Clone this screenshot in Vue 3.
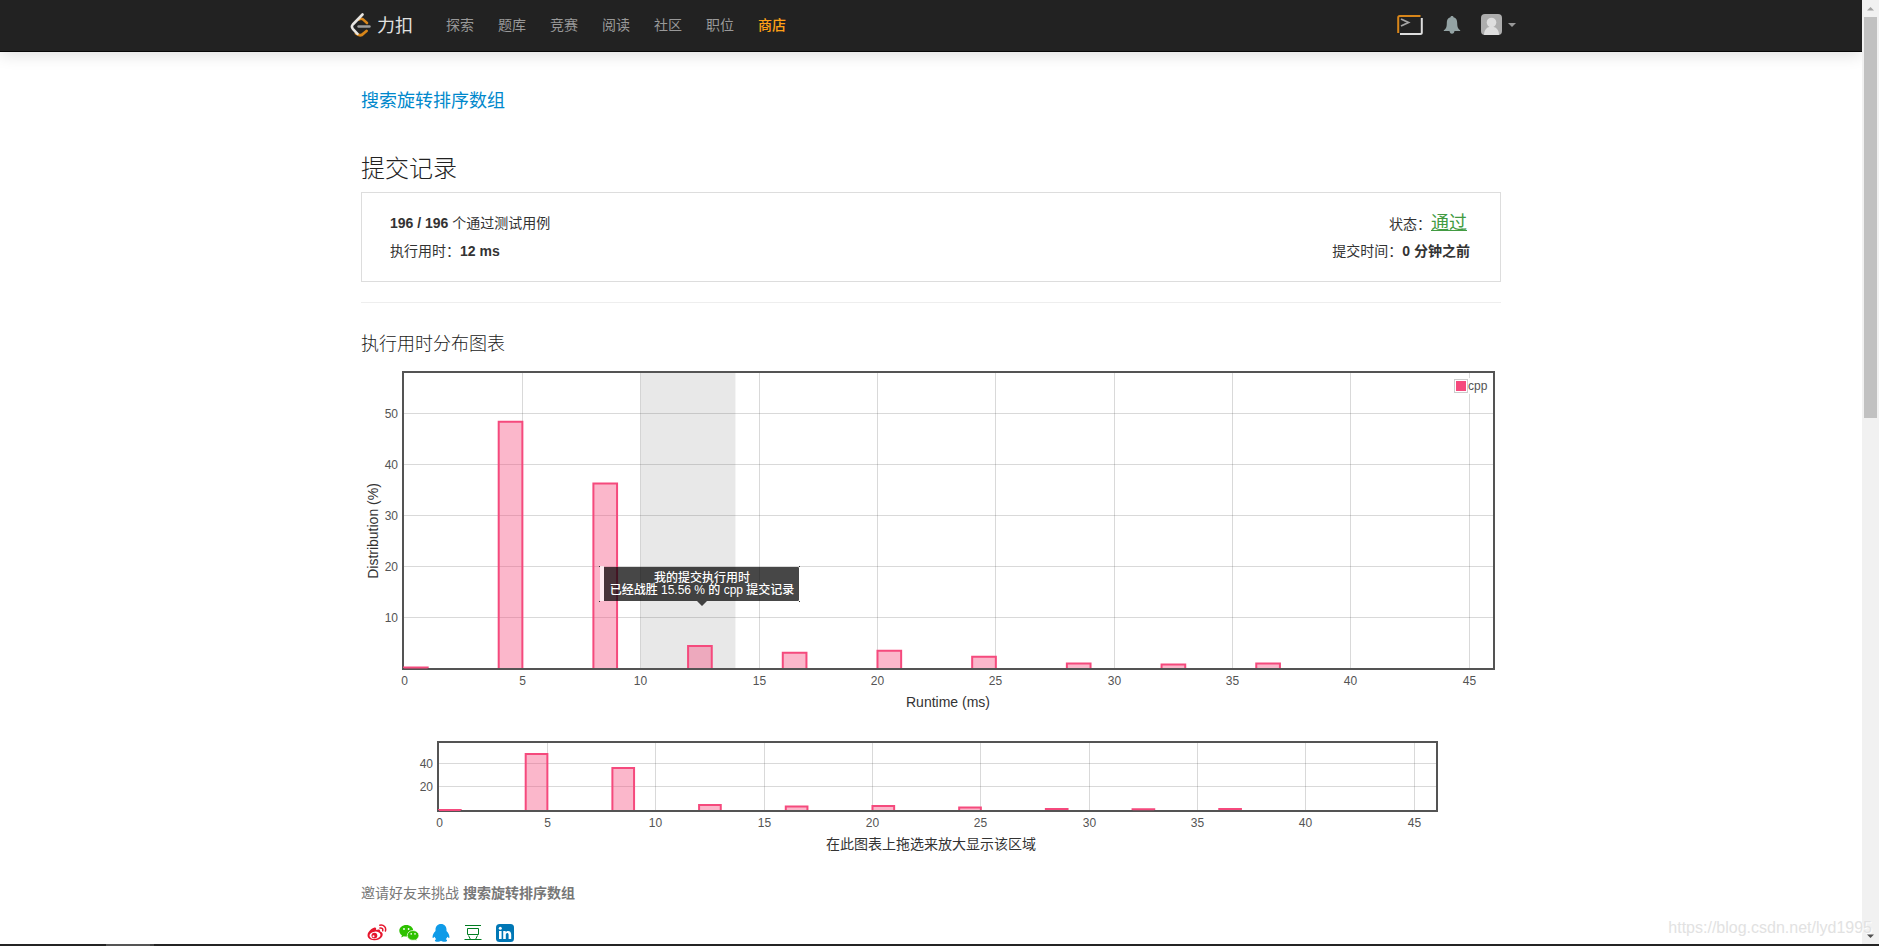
<script setup>
const navItems = ['探索', '题库', '竞赛', '阅读', '社区', '职位']

const samples = [
  { x: 0, y: 0.1 },
  { x: 4, y: 48.3 },
  { x: 8, y: 36.2 },
  { x: 12, y: 4.3 },
  { x: 16, y: 3 },
  { x: 20, y: 3.4 },
  { x: 24, y: 2.2 },
  { x: 28, y: 0.9 },
  { x: 32, y: 0.7 },
  { x: 36, y: 0.9 }
]
const xTicks = [0, 5, 10, 15, 20, 25, 30, 35, 40, 45]

function makeChart(left, right, top, bottom, maxX, perPercent, yTicks) {
  const px = (v) => left + (v * (right - left)) / maxX
  const py = (v) => bottom - v * perPercent
  return {
    left, right, top, bottom, px,
    bars: samples.map((s) => ({
      key: s.x,
      d: `M${px(s.x)} ${bottom}V${py(s.y)}H${px(s.x + 1)}V${bottom}`
    })),
    xs: xTicks.map((v) => ({ v, p: Math.floor(px(v)) + 0.5 })),
    ys: yTicks.map((v) => ({ v, p: Math.floor(py(v)) + 0.5 }))
  }
}

const main = makeChart(43, 1132, 13, 308, 46, 5.1, [10, 20, 30, 40, 50])
const overview = makeChart(78, 1075, 23, 90, 46, 1.16, [20, 40])
</script>

<template>
  <div class="window">
    <div class="page">
      <header class="navbar">
        <div class="navbar-inner">
          <a class="brand" href="#">
            <svg width="22" height="24" viewBox="0 0 22 24" fill="none" stroke-linecap="round" stroke-linejoin="round">
              <path d="M9 6.5Q11 5 13 6.4L17 10" stroke="#d8861a" stroke-width="2.6" />
              <path d="M6 20.5Q10.500 24 13.500 20.500L16.500 18" stroke="#d8861a" stroke-width="2.8" />
              <path d="M12.500 1.500L2.800 11.500Q1 13.500 2.800 15.800L7.500 20.800" stroke="#e7e5e2" stroke-width="2.600" />
              <path d="M8.500 13.500H19.500" stroke="#9c9c9c" stroke-width="2.400" />
            </svg>
            <span>力扣</span>
          </a>
          <nav class="links">
            <a v-for="item in navItems" :key="item" href="#">{{ item }}</a>
            <a class="store" href="#">商店</a>
          </nav>
          <div class="tools">
            <button type="button" aria-label="Playground">
              <svg width="26" height="22" viewBox="0 0 26 22" fill="none" stroke-width="2">
                <path d="M24.800 4V18.500Q24.800 20 23.300 20H3" stroke="#dedede" />
                <path d="M1.200 19V3.500Q1.200 2 2.700 2H23.500" stroke="#d8861a" />
                <path d="M4 5L11.500 8.500L4 12" stroke="#a5a5a5" stroke-width="1.800" />
              </svg>
            </button>
            <button type="button" aria-label="Notifications" class="bell">
              <svg width="18" height="20" viewBox="0 0 18 20" fill="#94a3a4">
                <path d="M9 1C9.900 1 10.500 1.500 10.500 2.300C13.300 3 14.200 5.300 14.200 8C14.200 12.500 15.200 14 17.200 15.300V16H11.500C11.300 17.600 10.500 18.800 9 18.800S6.700 17.600 6.500 16H.8V15.300C2.800 14 3.800 12.500 3.800 8C3.800 5.300 4.700 3 7.500 2.300C7.500 1.500 8.100 1 9 1Z" />
              </svg>
            </button>
            <button type="button" aria-label="Account" class="account">
              <svg width="21" height="21" viewBox="0 0 21 21">
                <clipPath id="avatar-clip"><rect width="21" height="21" rx="4" /></clipPath>
                <g clip-path="url(#avatar-clip)">
                  <rect width="21" height="21" fill="#adadad" />
                  <circle cx="10.500" cy="8.500" r="4.800" fill="#dedede" />
                  <path d="M3 21C3 16 6 12.500 10.500 12.500S18 16 18 21Z" fill="#dedede" />
                </g>
              </svg>
              <svg width="8" height="4" viewBox="0 0 8 4"><path d="M0 0H8L4 4Z" fill="#999" /></svg>
            </button>
          </div>
        </div>
      </header>

      <main class="content">
        <h4 class="problem"><a href="#">搜索旋转排序数组</a></h4>
        <h2 class="heading">提交记录</h2>
        <section class="summary">
          <div>
            <p><strong>196 / 196</strong> 个通过测试用例</p>
            <p>执行用时：<strong>12 ms</strong></p>
          </div>
          <div class="summary-right">
            <p class="status">状态：<a href="#">通过</a></p>
            <p>提交时间：<strong>0 分钟之前</strong></p>
          </div>
        </section>
        <hr />
        <h4 class="chart-title">执行用时分布图表</h4>

        <svg class="chart" viewBox="0 0 1140 360" role="img" aria-label="执行用时分布图表">
          <rect :x="main.px(10)" :y="main.top" :width="main.px(14) - main.px(10)" :height="main.bottom - main.top" fill="#e8e8e8" />
          <g class="grid">
            <path v-for="t in main.xs.slice(1)" :key="'x' + t.v" :d="`M${t.p} ${main.top}V${main.bottom}`" />
            <path v-for="t in main.ys" :key="'y' + t.v" :d="`M${main.left} ${t.p}H${main.right}`" />
          </g>
          <rect class="frame" :x="main.left - 1" :y="main.top - 1" :width="main.right - main.left + 2" :height="main.bottom - main.top + 2" />
          <path v-for="b in main.bars" :key="b.key" class="bar" :d="b.d" />
          <g class="tick">
            <text v-for="t in main.xs" :key="t.v" :x="t.p" y="325" text-anchor="middle">{{ t.v }}</text>
            <text v-for="t in main.ys" :key="'l' + t.v" x="37" :y="t.p + 4" text-anchor="end">{{ t.v }}</text>
          </g>
          <rect x="1093" y="18" width="36" height="16" fill="#fff" fill-opacity=".85" />
          <rect x="1093.500" y="19.500" width="13" height="13" fill="#fff" stroke="#ccc" />
          <rect x="1095" y="21" width="10" height="10" fill="#f54a7d" />
          <text class="tick" x="1107" y="30">cpp</text>
          <text class="axis" x="587" y="347" text-anchor="middle">Runtime (ms)</text>
          <text class="axis" transform="translate(17 171) rotate(-90)" text-anchor="middle">Distribution (%)</text>
          <g>
            <rect x="239" y="206" width="4" height="35" fill="#fff" fill-opacity=".72" />
            <path d="M238 206H239V207H238ZM238 241H239V242H238ZM438 206H439V207H438ZM438 241H439V242H438Z" fill="#333" />
            <path d="M243 207H437Q438 207 438 208V240Q438 241 437 241H346L341 246L336 241H243Z" fill="#000" fill-opacity=".72" />
            <text class="tip" x="341" y="222" text-anchor="middle">我的提交执行用时</text>
            <text class="tip" x="341" y="234" text-anchor="middle">已经战胜 15.56 % 的 cpp 提交记录</text>
          </g>
        </svg>

        <svg class="chart" viewBox="0 0 1140 140" role="img" aria-label="在此图表上拖选来放大显示该区域">
          <g class="grid">
            <path v-for="t in overview.xs.slice(1)" :key="'x' + t.v" :d="`M${t.p} ${overview.top}V${overview.bottom}`" />
            <path v-for="t in overview.ys" :key="'y' + t.v" :d="`M${overview.left} ${t.p}H${overview.right}`" />
          </g>
          <rect class="frame" :x="overview.left - 1" :y="overview.top - 1" :width="overview.right - overview.left + 2" :height="overview.bottom - overview.top + 2" />
          <path v-for="b in overview.bars" :key="b.key" class="bar" :d="b.d" />
          <g class="tick">
            <text v-for="t in overview.xs" :key="t.v" :x="t.p" y="107" text-anchor="middle">{{ t.v }}</text>
            <text v-for="t in overview.ys" :key="'l' + t.v" x="72" :y="t.p + 4" text-anchor="end">{{ t.v }}</text>
          </g>
          <text class="axis" x="570" y="129" text-anchor="middle">在此图表上拖选来放大显示该区域</text>
        </svg>

        <p class="invite">邀请好友来挑战 <strong>搜索旋转排序数组</strong></p>
        <div class="share">
          <a href="#" aria-label="Weibo">
            <svg width="20" height="18" viewBox="0 0 20 18">
              <path d="M7.500 3.500C9 3 9.500 4.500 9 6C11.500 5 13.500 5.300 13.200 7.500C15.500 8.300 16.300 10 15.300 12.300C13.800 15.300 10.500 16.500 7 16.300C3 16 0 13.800.6 10.500C1.200 7.500 4.500 4.300 7.500 3.500Z" fill="#e6162d" />
              <ellipse cx="8" cy="11.300" rx="5.500" ry="3.700" fill="#fff" transform="rotate(-8 8 11.300)" />
              <circle cx="7.400" cy="11.600" r="2.900" fill="#e6162d" />
              <circle cx="6.500" cy="12.300" r="1" fill="#fff" />
              <path d="M12.800 1.200C16.800.4 19.500 3.500 18.400 7M13 4C15 3.600 16.200 5 15.700 6.700" fill="none" stroke="#e6162d" stroke-width="1.500" stroke-linecap="round" />
            </svg>
          </a>
          <a href="#" aria-label="WeChat">
            <svg width="20" height="18" viewBox="0 0 20 18">
              <path d="M7.300 1C3.300 1 .3 3.500.3 6.800C.3 8.700 1.300 10.300 2.900 11.300L2.300 13.400L4.800 12.200C7 13 10 12.500 12 11C13.500 10 14.400 8.500 14.300 6.600C14 3.400 11.200 1 7.300 1Z" fill="#2dc100" />
              <path d="M14 6.500C10.700 6.500 8.300 8.700 8.300 11.400C8.300 14.200 10.700 16.300 14 16.300C14.800 16.300 15.500 16.200 16.200 16L18 17L17.600 15.200C19 14.200 19.900 12.900 19.900 11.400C19.900 8.700 17.300 6.500 14 6.500Z" fill="#2dc100" stroke="#fff" stroke-width=".7" />
              <g fill="#fff"><circle cx="5" cy="5" r=".9" /><circle cx="9.600" cy="5" r=".9" /><circle cx="12.200" cy="9.900" r=".8" /><circle cx="16" cy="9.900" r=".8" /></g>
            </svg>
          </a>
          <a href="#" aria-label="QQ">
            <svg width="18" height="18" viewBox="0 0 18 18" fill="#0f9be8">
              <path d="M9 0C5.500 0 3.500 2.500 3.500 5.500V7C1.500 9 .3 11.700.6 13.500C.8 14.500 1.800 13.900 2.600 12.800C2.900 13.800 3.500 14.600 4.200 15.200C2.600 15.800 2.300 17.500 4.500 17.700C6.400 17.900 8 17.500 9 16.700C10 17.500 11.600 17.900 13.500 17.700C15.700 17.500 15.400 15.800 13.800 15.200C14.500 14.600 15.100 13.800 15.400 12.800C16.200 13.900 17.200 14.500 17.400 13.500C17.700 11.700 16.500 9 14.500 7V5.500C14.500 2.500 12.500 0 9 0Z" />
            </svg>
          </a>
          <a href="#" aria-label="Douban">
            <svg width="18" height="18" viewBox="0 0 18 18" fill="none" stroke="#007c21" stroke-width="1">
              <path d="M1 1.500H17M.5 15.500H17.500M3.500 4.500H14.500V10.500H3.500ZM4.500 11.500L6.500 15.500M13.500 11.500L11.500 15.500" />
            </svg>
          </a>
          <a href="#" aria-label="LinkedIn">
            <svg width="18" height="18" viewBox="0 0 18 18">
              <rect width="18" height="18" rx="3.500" fill="#0077b5" />
              <g fill="#fff"><circle cx="4.300" cy="4.300" r="1.500" /><rect x="3" y="7" width="2.600" height="8" /><path d="M7.200 7H9.700V8.200C11 6.200 15.200 6.200 15.200 10.500V15H12.600V11C12.600 8.300 9.800 8.600 9.800 11V15H7.200Z" /></g>
            </svg>
          </a>
        </div>
      </main>
    </div>

    <div class="scrollbar">
      <svg width="9" height="5" viewBox="0 0 9 5"><path d="M1 4.500H8L4.500 1Z" fill="#a3a3a3" /></svg>
      <div class="track"><div class="thumb"></div></div>
      <svg width="9" height="5" viewBox="0 0 9 5"><path d="M1 .5H8L4.500 4Z" fill="#505050" /></svg>
    </div>
    <div class="strip"><span></span><i></i></div>
    <div class="watermark">https://blog.csdn.net/lyd1995</div>
  </div>
</template>

<style>
body {
  margin: 0;
  overflow: hidden;
}
</style>

<style scoped>
.window {
  position: relative;
  display: grid;
  grid-template: minmax(0, 1fr) 2px / minmax(0, 1fr) 17px;
  height: 100vh;
  background: #fff;
  color: #333;
  font: 14px/28px "Liberation Sans", "Noto Sans CJK SC", sans-serif;
}
.page {
  overflow: hidden;
}
a {
  text-decoration: none;
}
h2, h4, p {
  margin: 0;
  font-weight: 400;
}
strong {
  font-weight: 700;
}
.navbar {
  background: #222;
  border-bottom: 1px solid #080808;
  box-shadow: 0 2px 16px rgba(0, 0, 0, .14);
}
.navbar-inner {
  display: flex;
  align-items: center;
  max-width: 1170px;
  height: 51px;
  margin: 0 auto;
}
.brand {
  display: flex;
  align-items: center;
  gap: 5px;
  padding-left: 4px;
  margin-right: 33px;
  color: #e0e0e0;
  font-size: 18px;
}
.brand svg {
  margin-bottom: 2px;
}
.links {
  display: flex;
  flex: 1;
  gap: 24px;
  padding-bottom: 2px;
}
.links a {
  color: #999;
}
.links .store {
  color: #ffa116;
  font-weight: 500;
}
.tools {
  display: flex;
  align-items: center;
  gap: 20px;
  padding-bottom: 2px;
}
.tools button {
  display: flex;
  align-items: center;
  padding: 0;
  border: 0;
  background: none;
}
.tools .account {
  gap: 6px;
}
.content {
  max-width: 1140px;
  margin: 0 auto;
  padding-top: 35px;
}
.problem {
  font-size: 18px;
}
.problem a {
  color: #08c;
}
.heading {
  margin: 39px 0 8px;
  font-size: 24px;
  font-weight: 300;
  line-height: 30px;
  color: #222;
}
.summary {
  display: flex;
  justify-content: space-between;
  padding: 16px 30px 16px 28px;
  border: 1px solid #ddd;
}
.summary-right {
  text-align: right;
}
.status {
  padding-right: 3px;
}
.status a {
  color: #429b42;
  font-size: 18px;
  text-decoration: underline;
  text-decoration-thickness: 1px;
}
.summary p {
  height: 28px;
}
hr {
  margin: 20px 0 25px;
  border: 0;
  border-top: 1px solid #eee;
}
.chart-title {
  font-size: 18px;
  font-weight: 300;
  line-height: 32px;
  color: #222;
}
.chart {
  display: block;
  width: 100%;
}
.grid path {
  stroke: #545454;
  stroke-opacity: .22;
}
.frame {
  fill: none;
  stroke: #545454;
  stroke-width: 2px;
}
.bar {
  fill: #f54a7d;
  fill-opacity: .4;
  stroke: #f54a7d;
  stroke-width: 2px;
}
.tick {
  fill: #545454;
  font-size: 12px;
}
.axis {
  fill: #333;
  font-size: 14px;
}
.tip {
  fill: #fff;
  font-size: 12px;
  font-weight: 500;
}
.invite {
  margin-top: 19px;
  color: #777;
}
.share {
  display: flex;
  align-items: center;
  height: 24px;
  margin-top: 14px;
}
.share a {
  display: flex;
  justify-content: center;
  width: 32px;
}
.scrollbar {
  display: flex;
  flex-direction: column;
  align-items: center;
  padding: 6px 0 5px;
  background: #f1f1f1;
}
.track {
  flex: 1;
  width: 13px;
  padding: 6px 0;
}
.thumb {
  height: 44%;
  background: #c1c1c1;
}
.strip {
  display: flex;
  grid-column: 1 / -1;
  padding-left: 106px;
  background: #242424;
}
.strip span {
  width: 44px;
  background: #555;
}
.strip i {
  width: 4px;
  background: #444;
}
.watermark {
  position: absolute;
  right: 7px;
  bottom: 4px;
  color: #e2e2e2;
  font-size: 16px;
  text-shadow: 1px 1px 0 #fff;
}
</style>
